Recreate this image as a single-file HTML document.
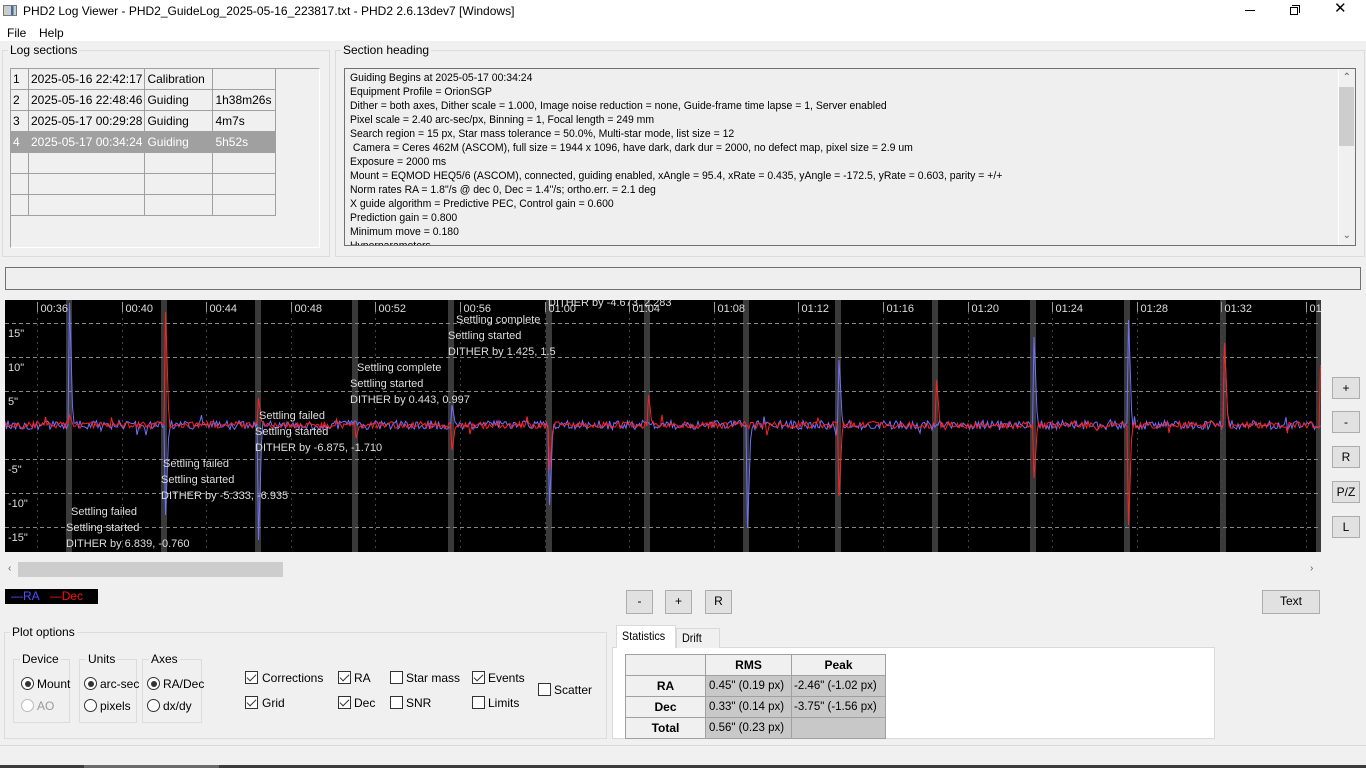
<!DOCTYPE html>
<html><head><meta charset="utf-8">
<style>
*{box-sizing:border-box;margin:0;padding:0}
body{width:1366px;height:768px;overflow:hidden;background:#f0f0f0;font-family:"Liberation Sans",Arial,sans-serif;font-size:12px;color:#000;position:relative}
.a{position:absolute}
.gb{position:absolute;border:1px solid #dcdcdc}
.gl{position:absolute;background:#f0f0f0;padding:0 2px;font-size:12px;top:-8px;left:5px;line-height:14px}
.btn{position:absolute;background:#e1e1e1;border:1px solid #adadad;text-align:center;font-size:12px;line-height:21px}
.cb{position:absolute;width:13px;height:13px;border:1px solid #333;background:#fff}
.cb.c::after{content:"";position:absolute;left:3px;top:0px;width:4px;height:8px;border:solid #333;border-width:0 1.5px 1.5px 0;transform:rotate(45deg)}
.rb{position:absolute;width:13px;height:13px;border:1px solid #333;border-radius:50%;background:#fff}
.rb.c::after{content:"";position:absolute;left:2.5px;top:2.5px;width:6px;height:6px;border-radius:50%;background:#333}
.lbl{position:absolute;font-size:12px;line-height:14px}
table{border-collapse:collapse}
.lt td{border:1px solid #a0a0a0;height:21px;padding:0 2px;font-size:12px;white-space:nowrap}
.st td{border:1px solid #a0a0a0;height:21px;font-size:12px;white-space:nowrap;text-align:center}
.pt{fill:#ddd;font-family:"Liberation Sans",Arial,sans-serif;font-size:11px}
</style></head><body>
<div class="a" style="left:0;top:0;width:1366px;height:41px;background:#fff"></div>
<div class="a" style="left:3px;top:5px;width:14px;height:11px;border:1px solid #777;background:linear-gradient(90deg,#ccc 0 60%,#3a6ea5 60% 80%,#ccc 80%)"></div>
<div class="lbl" style="left:23px;top:4px;font-size:12px">PHD2 Log Viewer - PHD2_GuideLog_2025-05-16_223817.txt - PHD2 2.6.13dev7 [Windows]</div>
<div class="a" style="left:1245px;top:10px;width:10px;height:1px;background:#000"></div>
<div class="a" style="left:1292px;top:5px;width:8px;height:8px;border:1px solid #000;border-bottom:none;border-left:none"></div>
<div class="a" style="left:1290px;top:7px;width:8px;height:8px;border:1px solid #000;background:#fff"></div>
<div class="lbl" style="left:1334px;top:2px;font-size:15px;font-weight:300">✕</div>
<div class="lbl" style="left:7px;top:26px">File</div>
<div class="lbl" style="left:39px;top:26px">Help</div>

<div class="gb" style="left:2px;top:50px;width:328px;height:207px"><div class="gl">Log sections</div></div>
<div class="a" style="left:10px;top:68px;width:310px;height:180px;border:1px solid #a0a0a0;border-right-color:#fff;border-bottom-color:#fff;background:#f0f0f0"></div>
<table class="lt a" style="left:10px;top:68px">
<tr><td style="width:18px">1</td><td style="width:113px">2025-05-16 22:42:17</td><td style="width:68px">Calibration</td><td style="width:63px"></td></tr>
<tr><td>2</td><td>2025-05-16 22:48:46</td><td>Guiding</td><td>1h38m26s</td></tr>
<tr><td>3</td><td>2025-05-17 00:29:28</td><td>Guiding</td><td>4m7s</td></tr>
<tr style="background:#a0a0a0;color:#fff"><td>4</td><td>2025-05-17 00:34:24</td><td>Guiding</td><td>5h52s</td></tr>
<tr><td></td><td></td><td></td><td></td></tr>
<tr><td></td><td></td><td></td><td></td></tr>
<tr><td></td><td></td><td></td><td></td></tr>
</table>

<div class="gb" style="left:335px;top:50px;width:1030px;height:207px"><div class="gl">Section heading</div></div>
<div class="a" style="left:344px;top:68px;width:1012px;height:178px;border:1px solid #707070;background:#efefef;overflow:hidden">
<div style="position:absolute;left:5px;top:2px;font-size:11px;line-height:14px;white-space:pre;transform:scaleX(0.95);transform-origin:0 0">Guiding Begins at 2025-05-17 00:34:24
Equipment Profile = OrionSGP
Dither = both axes, Dither scale = 1.000, Image noise reduction = none, Guide-frame time lapse = 1, Server enabled
Pixel scale = 2.40 arc-sec/px, Binning = 1, Focal length = 249 mm
Search region = 15 px, Star mass tolerance = 50.0%, Multi-star mode, list size = 12
 Camera = Ceres 462M (ASCOM), full size = 1944 x 1096, have dark, dark dur = 2000, no defect map, pixel size = 2.9 um
Exposure = 2000 ms
Mount = EQMOD HEQ5/6 (ASCOM), connected, guiding enabled, xAngle = 95.4, xRate = 0.435, yAngle = -172.5, yRate = 0.603, parity = +/+
Norm rates RA = 1.8"/s @ dec 0, Dec = 1.4"/s; ortho.err. = 2.1 deg
X guide algorithm = Predictive PEC, Control gain = 0.600
Prediction gain = 0.800
Minimum move = 0.180
Hyperparameters</div>
<div class="a" style="right:0;top:0;width:17px;height:176px;background:#f0f0f0;border-left:1px solid #fff"></div>
<div class="a" style="right:1px;top:18px;width:15px;height:59px;background:#cdcdcd"></div>
<div class="lbl" style="right:4px;top:2px;font-size:10px;color:#606060">&#8963;</div>
<div class="lbl" style="right:4px;top:160px;font-size:10px;color:#606060">&#8964;</div>
</div>

<div class="a" style="left:5px;top:267px;width:1356px;height:23px;border:1px solid #707070;background:#efefef"></div>

<svg class="a" style="left:5px;top:300px" width="1316" height="252" id="plot">
<rect width="1316" height="252" fill="#000"/>
<g id="bars" fill="#3a3a3a"></g>
<g stroke="#888" stroke-dasharray="4,3" stroke-width="1">
<line x1="0" x2="1316" y1="23.5" y2="23.5"/><line x1="0" x2="1316" y1="57.5" y2="57.5"/><line x1="0" x2="1316" y1="91.5" y2="91.5"/>
<line x1="0" x2="1316" y1="159.5" y2="159.5"/><line x1="0" x2="1316" y1="193.5" y2="193.5"/><line x1="0" x2="1316" y1="227.5" y2="227.5"/>
</g>
<g id="ticks" stroke="#999"></g>
<g id="tlab" class="pt"></g>
<g class="pt">
<text x="3" y="37">15"</text><text x="3" y="71">10"</text><text x="3" y="105">5"</text>
<text x="3" y="173">-5"</text><text x="3" y="207">-10"</text><text x="3" y="241">-15"</text>
</g>
<path id="ra" fill="none" stroke="#7070ff" stroke-width="1"/>
<path id="dec" fill="none" stroke="#ff2020" stroke-width="1"/>
<g class="pt">
<text x="66" y="215">Settling failed</text><text x="61" y="231">Settling started</text><text x="61" y="247">DITHER by 6.839, -0.760</text>
<text x="158" y="167">Settling failed</text><text x="156" y="183">Settling started</text><text x="156" y="199">DITHER by -5.333, -6.935</text>
<text x="254" y="119">Settling failed</text><text x="250" y="135">Settling started</text><text x="250" y="151">DITHER by -6.875, -1.710</text>
<text x="352" y="71">Settling complete</text><text x="345" y="87">Settling started</text><text x="345" y="103">DITHER by 0.443, 0.997</text>
<text x="451" y="23">Settling complete</text><text x="443" y="39">Settling started</text><text x="443" y="55">DITHER by 1.425, 1.5</text>
<text x="543" y="6">DITHER by -4.673, 2.283</text>
</g>
</svg>
<div class="btn" style="left:1332px;top:377px;width:28px;height:22px">+</div>
<div class="btn" style="left:1332px;top:411px;width:28px;height:22px">-</div>
<div class="btn" style="left:1332px;top:446px;width:28px;height:22px">R</div>
<div class="btn" style="left:1332px;top:481px;width:28px;height:22px">P/Z</div>
<div class="btn" style="left:1332px;top:516px;width:28px;height:22px">L</div>

<div class="a" style="left:5px;top:561px;width:1316px;height:17px;background:#f0f0f0"></div>
<div class="a" style="left:18px;top:562px;width:265px;height:15px;background:#cdcdcd"></div>
<div class="lbl" style="left:8px;top:562px;font-size:10px;color:#606060">&#8249;</div>
<div class="lbl" style="left:1310px;top:562px;font-size:10px;color:#606060">&#8250;</div>

<div class="a" style="left:5px;top:589px;width:93px;height:15px;background:#000;font-size:12px;line-height:15px;padding-left:6px"><span style="color:#5050ff">—RA</span>&nbsp;&nbsp;&nbsp;<span style="color:#ff1010">—Dec</span></div>

<div class="btn" style="left:626px;top:590px;width:27px;height:24px">-</div>
<div class="btn" style="left:665px;top:590px;width:27px;height:24px">+</div>
<div class="btn" style="left:705px;top:590px;width:27px;height:24px">R</div>
<div class="btn" style="left:1262px;top:590px;width:58px;height:24px">Text</div>

<div class="gb" style="left:4px;top:632px;width:603px;height:107px"><div class="gl">Plot options</div></div>
<div class="gb" style="left:13px;top:659px;width:57px;height:64px"><div class="gl" style="left:6px">Device</div></div>
<div class="gb" style="left:79px;top:659px;width:58px;height:64px"><div class="gl" style="left:6px">Units</div></div>
<div class="gb" style="left:142px;top:659px;width:60px;height:64px"><div class="gl" style="left:6px">Axes</div></div>
<div class="rb c" style="left:21px;top:677px"></div><div class="lbl" style="left:37px;top:677px">Mount</div>
<div class="rb" style="left:21px;top:699px;border-color:#bbb"></div><div class="lbl" style="left:37px;top:699px;color:#9a9a9a">AO</div>
<div class="rb c" style="left:84px;top:677px"></div><div class="lbl" style="left:100px;top:677px">arc-sec</div>
<div class="rb" style="left:84px;top:699px"></div><div class="lbl" style="left:100px;top:699px">pixels</div>
<div class="rb c" style="left:147px;top:677px"></div><div class="lbl" style="left:163px;top:677px">RA/Dec</div>
<div class="rb" style="left:147px;top:699px"></div><div class="lbl" style="left:163px;top:699px">dx/dy</div>
<div class="cb c" style="left:245px;top:671px"></div><div class="lbl" style="left:262px;top:671px">Corrections</div>
<div class="cb c" style="left:245px;top:696px"></div><div class="lbl" style="left:262px;top:696px">Grid</div>
<div class="cb c" style="left:338px;top:671px"></div><div class="lbl" style="left:354px;top:671px">RA</div>
<div class="cb c" style="left:338px;top:696px"></div><div class="lbl" style="left:354px;top:696px">Dec</div>
<div class="cb" style="left:390px;top:671px"></div><div class="lbl" style="left:406px;top:671px">Star mass</div>
<div class="cb" style="left:390px;top:696px"></div><div class="lbl" style="left:406px;top:696px">SNR</div>
<div class="cb c" style="left:472px;top:671px"></div><div class="lbl" style="left:488px;top:671px">Events</div>
<div class="cb" style="left:472px;top:696px"></div><div class="lbl" style="left:488px;top:696px">Limits</div>
<div class="cb" style="left:538px;top:683px"></div><div class="lbl" style="left:554px;top:683px">Scatter</div>

<div class="a" style="left:612px;top:647px;width:603px;height:92px;background:#fff;border:1px solid #d9d9d9"></div>
<div class="a" style="left:676px;top:628px;width:44px;height:20px;border:1px solid #d9d9d9;border-bottom:none;background:#f0f0f0"></div>
<div class="lbl" style="left:682px;top:631px;transform:scaleX(.9);transform-origin:0 0">Drift</div>
<div class="a" style="left:616px;top:625px;width:60px;height:23px;border:1px solid #d9d9d9;border-bottom:none;background:#fff"></div>
<div class="lbl" style="left:622px;top:629px;transform:scaleX(.9);transform-origin:0 0">Statistics</div>
<table class="st a" style="left:625px;top:654px;background:#c8c8c8">
<tr style="font-weight:bold;background:#f0f0f0"><td style="width:80px;height:20px"></td><td style="width:86px">RMS</td><td style="width:94px">Peak</td></tr>
<tr><td style="background:#f0f0f0;font-weight:bold">RA</td><td style="font-size:11.5px;text-align:left;padding-left:3px">0.45" (0.19 px)</td><td style="font-size:11.5px;text-align:left;padding-left:2px">-2.46" (-1.02 px)</td></tr>
<tr><td style="background:#f0f0f0;font-weight:bold">Dec</td><td style="font-size:11.5px;text-align:left;padding-left:3px">0.33" (0.14 px)</td><td style="font-size:11.5px;text-align:left;padding-left:2px">-3.75" (-1.56 px)</td></tr>
<tr><td style="background:#f0f0f0;font-weight:bold">Total</td><td style="font-size:11.5px;text-align:left;padding-left:3px">0.56" (0.23 px)</td><td></td></tr>
</table>

<div class="a" style="left:0;top:745px;width:1366px;height:1px;background:#d9d9d9"></div>
<div class="a" style="left:0;top:765px;width:1366px;height:3px;background:#3c3c3c"></div>
<div class="a" style="left:84px;top:765px;width:135px;height:3px;background:#6a6a6a"></div>

<script>
(function(){
var NS="http://www.w3.org/2000/svg";
function el(p,t,a,txt){var e=document.createElementNS(NS,t);for(var k in a)e.setAttribute(k,a[k]);if(txt)e.textContent=txt;p.appendChild(e);return e;}
var bars=[62,157,251,348,444,542,640,739,831,928,1026,1120,1216,1312];
var bg=document.getElementById('bars');
bars.forEach(function(x){el(bg,'rect',{x:x-1,y:0,width:6,height:252});});
var tk=document.getElementById('ticks'),tl=document.getElementById('tlab');
var labs=['00:36','00:40','00:44','00:48','00:52','00:56','01:00','01:04','01:08','01:12','01:16','01:20','01:24','01:28','01:32','01'];
for(var i=0;i<labs.length;i++){var x=Math.round(32+i*84.6)+.5;
el(tk,'line',{x1:x,x2:x,y1:2,y2:12});
el(tk,'line',{x1:x,x2:x,y1:12,y2:252,'stroke-dasharray':'2,4','stroke':'#444'});
el(tl,'text',{x:x+3,y:12},labs[i]);}
var s=12345;function r(){s=(s*16807)%2147483647;return s/2147483647;}
var Z=125;
var raS={62:-122,157:90,251:115,444:-20,542:80,739:103,831:-65,1026:-88,1120:-105,1216:-82};
var decS={62:-10,157:-113,251:-27,348:13,444:25,542:45,640:-30,831:71,928:-45,1026:53,1120:100,1216:-82,1312:-60};
function gen(spk,amp){var d='M0 '+Z;for(var x=0;x<1316;x+=1.5){var y=Z+(r()-.5)*amp;if(r()<.03)y+=(r()-.5)*amp*2.5;
for(var k in spk){var bx=+k+3;var dx=x-bx;if(dx>=-0.75&&dx<0.75){y=Z+spk[k];}else if(dx>=0.75&&dx<2.25){y=Z+spk[k]*0.6;}else if(dx>=2.25&&dx<3.75){y=Z+spk[k]*0.15;}}
d+=' L'+x+' '+y.toFixed(1);}return d;}
document.getElementById('ra').setAttribute('d',gen(raS,9));
document.getElementById('dec').setAttribute('d',gen(decS,7));
})();
</script>
</body></html>
